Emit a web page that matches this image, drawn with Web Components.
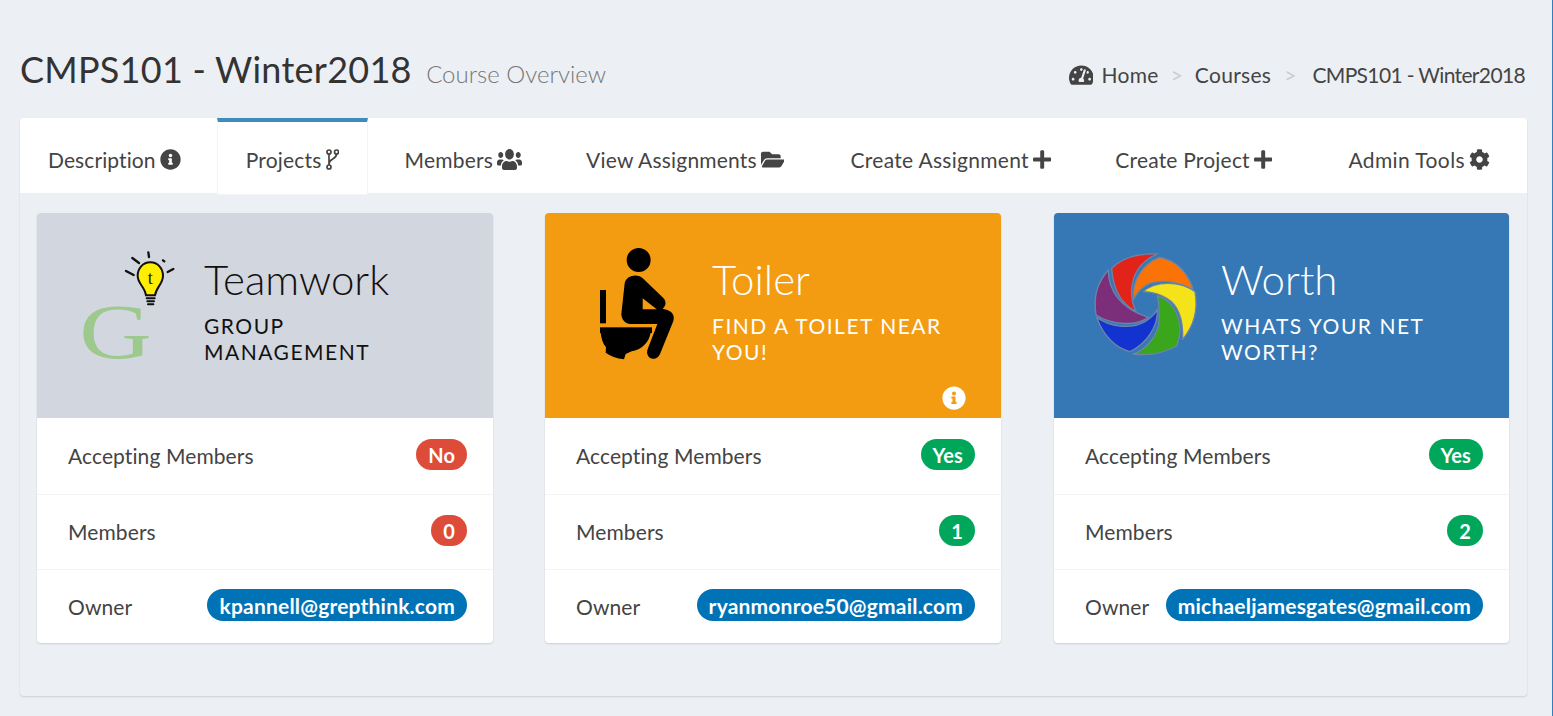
<!DOCTYPE html>
<html>
<head>
<meta charset="utf-8">
<title>CMPS101 - Winter2018</title>
<style>
  html, body { margin: 0; height: 100%; }
  body {
    background: #ecf0f5;
    color: #444;
    font-family: Lato, "Open Sans", "Liberation Sans", sans-serif;
    border-right: 1px solid #2f7fc1;
    box-sizing: border-box;
    overflow: hidden;
  }
</style>
</head>
<body>
<course-page>
  <page-header slot="header" heading="CMPS101 - Winter2018" sub="Course Overview">
    <fa-icon slot="crumb-icon" name="gauge" size="22"></fa-icon>
    <span slot="crumb" style="letter-spacing:.3px">Home</span>
    <span slot="crumb" style="letter-spacing:.3px">Courses</span>
    <span slot="crumb" style="letter-spacing:-.65px">CMPS101 - Winter2018</span>
  </page-header>
  <tab-bar slot="tabs">
    <tab-item icon="info" style="letter-spacing:.1px">Description</tab-item>
    <tab-item icon="branch" active style="margin-right:1px">Projects</tab-item>
    <tab-item icon="users">Members</tab-item>
    <tab-item icon="folder" style="margin-right:2px">View Assignments</tab-item>
    <tab-item icon="plus" style="letter-spacing:.3px">Create Assignment</tab-item>
    <tab-item icon="plus">Create Project</tab-item>
    <tab-item icon="cog" style="letter-spacing:.4px">Admin Tools</tab-item>
  </tab-bar>
  <project-card name="Teamwork" tagline="GROUP MANAGEMENT" bg="#d2d6de" fg="#111" accepting="No" members="0" owner="kpannell@grepthink.com" tone="red" logo="teamwork"></project-card>
  <project-card name="Toiler" tagline="FIND A TOILET NEAR YOU!" bg="#f39c12" fg="#fff" accepting="Yes" members="1" owner="ryanmonroe50@gmail.com" tone="green" logo="toiler" info></project-card>
  <project-card name="Worth" tagline="WHATS YOUR NET WORTH?" bg="#3578b5" fg="#fff" accepting="Yes" members="2" owner="michaeljamesgates@gmail.com" tone="green" logo="worth"></project-card>
</course-page>

<script>
const ICONS = {
  info: [512, "M256 8C119.043 8 8 119.083 8 256c0 136.997 111.043 248 248 248s248-111.003 248-248C504 119.083 392.957 8 256 8zm0 110c23.196 0 42 18.804 42 42s-18.804 42-42 42-42-18.804-42-42 18.804-42 42-42zm56 254c0 6.627-5.373 12-12 12h-88c-6.627 0-12-5.373-12-12v-24c0-6.627 5.373-12 12-12h12v-64h-12c-6.627 0-12-5.373-12-12v-24c0-6.627 5.373-12 12-12h64c6.627 0 12 5.373 12 12v100h12c6.627 0 12 5.373 12 12v24z"],
  plus: [448, "M416 208H272V64c0-17.67-14.33-32-32-32h-32c-17.67 0-32 14.33-32 32v144H32c-17.67 0-32 14.33-32 32v32c0 17.67 14.33 32 32 32h144v144c0 17.67 14.33 32 32 32h32c17.67 0 32-14.33 32-32V304h144c17.67 0 32-14.33 32-32v-32c0-17.67-14.33-32-32-32z"],
  users: [640, "M96 224c35.3 0 64-28.7 64-64s-28.7-64-64-64-64 28.7-64 64 28.7 64 64 64zm448 0c35.3 0 64-28.7 64-64s-28.7-64-64-64-64 28.7-64 64 28.7 64 64 64zm32 32h-64c-17.6 0-33.5 7.1-45.1 18.6 40.3 22.1 68.9 62 75.1 109.4h66c17.7 0 32-14.3 32-32v-32c0-35.3-28.7-64-64-64zm-256 0c61.9 0 112-50.1 112-112S381.9 32 320 32 208 82.1 208 144s50.1 112 112 112zm76.8 32h-8.3c-20.8 10-43.9 16-68.5 16s-47.6-6-68.5-16h-8.3C179.6 288 128 339.6 128 403.2V432c0 26.5 21.5 48 48 48h288c26.5 0 48-21.5 48-48v-28.8c0-63.6-51.6-115.2-115.2-115.2zm-223.7-13.4C161.5 263.1 145.6 256 128 256H64c-35.3 0-64 28.7-64 64v32c0 17.7 14.3 32 32 32h65.9c6.3-47.4 34.9-87.3 75.2-109.4z"],
  folder: [576, "M572.694 292.093L500.27 416.248A63.997 63.997 0 0 1 444.989 448H45.025c-18.523 0-30.064-20.093-20.731-36.093l72.424-124.155A64 64 0 0 1 152 256h399.964c18.523 0 30.064 20.093 20.73 36.093zM152 224h328v-48c0-26.51-21.49-48-48-48H272l-64-64H48C21.49 64 0 85.49 0 112v278.046l69.077-118.418C86.214 242.25 117.989 224 152 224z"],
  cog: [512, "M487.4 315.7l-42.6-24.6c4.3-23.2 4.3-47 0-70.2l42.6-24.6c4.9-2.8 7.1-8.6 5.5-14-11.1-35.6-30-67.8-54.7-94.6-3.8-4.1-10-5.1-14.8-2.3L380.8 110c-17.9-15.4-38.5-27.3-60.8-35.1V25.8c0-5.6-3.9-10.5-9.4-11.7-36.7-8.2-74.3-7.8-109.2 0-5.5 1.2-9.4 6.1-9.4 11.7V75c-22.2 7.9-42.8 19.8-60.8 35.1L88.7 85.5c-4.9-2.8-11-1.9-14.8 2.3-24.7 26.7-43.6 58.9-54.7 94.6-1.7 5.4.6 11.2 5.5 14L67.3 221c-4.3 23.2-4.3 47 0 70.2l-42.6 24.6c-4.9 2.8-7.1 8.6-5.5 14 11.1 35.6 30 67.8 54.7 94.6 3.8 4.1 10 5.1 14.8 2.3l42.6-24.6c17.9 15.4 38.5 27.3 60.8 35.1v49.2c0 5.6 3.9 10.5 9.4 11.7 36.7 8.2 74.3 7.8 109.2 0 5.5-1.2 9.4-6.1 9.4-11.7v-49.2c22.2-7.9 42.8-19.8 60.8-35.1l42.6 24.6c4.9 2.8 11 1.9 14.8-2.3 24.7-26.7 43.6-58.9 54.7-94.6 1.5-5.5-.7-11.3-5.6-14.1zM256 336c-44.1 0-80-35.9-80-80s35.9-80 80-80 80 35.9 80 80-35.9 80-80 80z"],
  gauge: [576, "M288 32C128.94 32 0 160.94 0 320c0 52.8 14.25 102.26 39.06 144.8 5.61 9.62 16.3 15.2 27.44 15.2h443c11.14 0 21.83-5.58 27.44-15.2C561.75 422.26 576 372.8 576 320c0-159.06-128.94-288-288-288zm0 64c14.71 0 26.58 10.13 30.32 23.65-1.11 2.26-2.64 4.23-3.45 6.67l-9.22 27.67c-5.13 3.49-10.97 6.01-17.64 6.01-17.67 0-32-14.33-32-32S270.33 96 288 96zM96 384c-17.67 0-32-14.33-32-32s14.33-32 32-32 32 14.33 32 32-14.33 32-32 32zm48-160c-17.67 0-32-14.33-32-32s14.33-32 32-32 32 14.33 32 32-14.33 32-32 32zm246.77-72.41l-61.33 184C343.13 347.33 352 364.54 352 384c0 11.72-3.38 22.55-8.88 32H232.88c-5.5-9.45-8.88-20.28-8.88-32 0-33.94 26.5-61.43 59.9-63.59l61.34-184.01c4.17-12.56 17.73-19.45 30.36-15.17 12.57 4.19 19.35 17.79 15.17 30.36zm14.66 57.2l15.52-46.55c3.47-1.29 7.13-2.23 11.05-2.23 17.67 0 32 14.33 32 32s-14.33 32-32 32c-11.38-.01-20.89-6.28-26.57-15.22zM480 384c-17.67 0-32-14.33-32-32s14.33-32 32-32 32 14.33 32 32-14.33 32-32 32z"]
};

class FaIcon extends HTMLElement {
  connectedCallback() {
    const name = this.getAttribute("name");
    const size = this.getAttribute("size") || 20;
    this.attachShadow({ mode: "open" });
    let svg;
    if (name === "branch") {
      // thin outlined branch, the stock glyph is too heavy here
      svg = `<svg width="13" height="21" viewBox="0 0 13 21" fill="none" stroke="currentColor" stroke-width="1.7">
        <circle cx="3" cy="3" r="2"/><circle cx="10.500" cy="3" r="2"/><circle cx="3" cy="18" r="2"/>
        <path d="M3 5v11M10.500 5c0 6-7.500 4-7.500 10"/></svg>`;
    } else if (name === "users") {
      // squeezed to the taller shape the reference has
      svg = `<svg width="25" height="21" viewBox="0 32 640 448" preserveAspectRatio="none" fill="currentColor"><path d="${ICONS.users[1]}"/></svg>`;
    } else {
      const [w, d] = ICONS[name];
      svg = `<svg height="${size}" viewBox="0 0 ${w} 512" fill="currentColor"><path d="${d}"/></svg>`;
    }
    this.shadowRoot.innerHTML = `<style>:host{display:inline-flex;align-items:center}svg{display:block}</style>${svg}`;
  }
}
customElements.define("fa-icon", FaIcon);

class CoursePage extends HTMLElement {
  constructor() {
    super();
    this.attachShadow({ mode: "open" });
    this.shadowRoot.innerHTML = `
      <style>
        :host { display: block; padding: 0 25px 20px 20px; }
        .box {
          background: #ecf0f5;
          border-radius: 4px;
          box-shadow: 0 1px 2px rgba(0,0,0,.14);
        }
        .cards {
          display: grid;
          grid-template-columns: repeat(3, 456px);
          column-gap: 52px;
          padding: 20px 18px 53px 17px;
        }
        ::slotted(project-card:last-child) { margin-left: 1px; }
      </style>
      <slot name="header"></slot>
      <div class="box">
        <slot name="tabs"></slot>
        <div class="cards"><slot></slot></div>
      </div>`;
  }
}
customElements.define("course-page", CoursePage);

class PageHeader extends HTMLElement {
  connectedCallback() {
    this.attachShadow({ mode: "open" });
    this.shadowRoot.innerHTML = `
      <style>
        :host {
          display: flex;
          justify-content: space-between;
          align-items: flex-start;
          height: 118px;
          box-sizing: border-box;
          padding: 43px 2px 0 0;
        }
        h1 { margin: 0; font-size: 36px; font-weight: 400; color: #333; line-height: 52px; letter-spacing: .25px; }
        small { font-size: 24px; font-weight: 300; color: #777; margin-left: 5px; letter-spacing: 0; }
        nav { display: flex; align-items: center; font-size: 21px; color: #444; margin-top: 19px; }
        .icon { margin-right: 8px; display: flex; }
      </style>
      <h1>${this.getAttribute("heading")} <small>${this.getAttribute("sub")}</small></h1>
      <nav>
        <span class="icon"><slot name="crumb-icon"></slot></span>
        <slot name="crumb"></slot>
      </nav>`;
    // separators go between the slotted crumbs
    const crumbs = this.querySelectorAll('[slot="crumb"]');
    crumbs.forEach((c, i) => {
      if (i > 0) {
        const s = document.createElement("span");
        s.slot = "crumb";
        s.textContent = ">";
        s.style.cssText = `color:#ccc;margin:0 ${i == 2 ? "16px 0 13px" : "12px"};`;
        c.before(s);
      }
    });
  }
}
customElements.define("page-header", PageHeader);

class TabBar extends HTMLElement {
  constructor() {
    super();
    this.attachShadow({ mode: "open" });
    this.shadowRoot.innerHTML = `
      <style>
        :host {
          display: flex;
          gap: 8px;
          height: 75px;
          background: #fff;
          border-radius: 4px 4px 0 0;
        }
        ::slotted(tab-item:last-child) { margin-left: auto; margin-right: 9px; }
      </style>
      <slot></slot>`;
  }
}
customElements.define("tab-bar", TabBar);

class TabItem extends HTMLElement {
  connectedCallback() {
    this.attachShadow({ mode: "open" });
    const on = this.hasAttribute("active");
    this.shadowRoot.innerHTML = `
      <style>
        :host {
          display: flex;
          align-items: center;
          box-sizing: border-box;
          height: ${on ? "77px" : "75px"};
          padding: 8px 28px 0;
          font-size: 21px;
          letter-spacing: .2px;
          color: #444;
          white-space: nowrap;
          ${on ? "background:#fff;border-top:4px solid #3c8dbc;border-left:1px solid #f4f4f4;border-right:1px solid #f4f4f4;border-bottom:1px solid #f4f4f4;padding-top:3px;" : ""}
        }
        fa-icon { margin-left: 4px; margin-top: -1px; }
      </style>
      <slot></slot><fa-icon name="${this.getAttribute("icon")}" size="21"></fa-icon>`;
  }
}
customElements.define("tab-item", TabItem);

class StatusPill extends HTMLElement {
  connectedCallback() {
    const colors = { red: "#dd4b39", green: "#00a65a", blue: "#0073b7" };
    this.attachShadow({ mode: "open" });
    this.shadowRoot.innerHTML = `
      <style>
        :host {
          display: inline-flex;
          align-items: center;
          justify-content: center;
          height: 31px;
          min-width: 36px;
          box-sizing: border-box;
          padding: 0 12px;
          border-radius: 16px;
          background: ${colors[this.getAttribute("tone")]};
          color: #fff;
          font-size: 20px;
          font-weight: 700;
          line-height: 1;
        }
      </style>
      <slot></slot>`;
  }
}
customElements.define("status-pill", StatusPill);

const LOGOS = {
  teamwork: `
    <g transform="translate(3 2) scale(.33333)">
      <text x="0" y="430" transform="translate(118 0) scale(1.3 1)" font-family="'Liberation Serif', serif" font-size="232" fill="#9dc98d">G</text>
      <g stroke="#111" stroke-linecap="round" fill="none" stroke-width="7">
        <path d="M325 112l2 14M277 129l20 15M258 168l23 12M369 136l4 3M383 171l17-9"/>
        <path d="M320 250h24M322 259h20M324 268h16" stroke-width="6"/>
      </g>
      <path d="M331 142c23 0 38 19 38 40 0 24-20 34-24 59h-27c-3-25-25-35-25-59 0-21 15-40 38-40z" fill="#ffee00" stroke="#111" stroke-width="6"/>
      <text x="331" y="208" text-anchor="middle" font-family="'Liberation Serif', serif" font-size="54" fill="#222">t</text>
    </g>`,
  toiler: `
    <g transform="translate(15 17) scale(.33333)" fill="#000">
      <circle cx="236" cy="90" r="36"/>
      <rect x="120" y="180" width="18" height="100"/>
      <rect x="120" y="292" width="156" height="17"/>
      <path d="M122 308H272C266 340 244 358 215 364L197 372L192 388C170 385 150 378 137 368L138 352C128 340 124 325 122 308Z"/>
      <path d="M194 160C198 136 232 128 250 146L310 204C320 214 318 228 308 236L322 240C340 246 346 262 338 278L300 372C294 388 276 390 266 380C260 372 260 365 264 355L292 282L212 282C196 282 184 268 184 252Z"/>
      <path d="M248 205L290 238H248Z" fill="#f39c12"/>
    </g>`,
  worth: `
    <g transform="translate(26 27) scale(.33333)" stroke="#6d84a8" stroke-width="4" stroke-linejoin="round">
      <path fill="#7d2e7a" d="M85 90C85 150 120 205 205 232C170 260 95 255 48 225C40 170 50 130 85 90Z"/>
      <path fill="#1233cf" d="M232 208C235 260 200 310 150 335C110 325 70 290 50 232C90 260 150 270 195 245C210 235 225 222 232 208Z"/>
      <path fill="#3aa61c" d="M232 168C270 175 300 220 300 270C300 295 295 305 290 318C250 340 205 348 160 342C195 330 225 295 235 260C240 225 238 195 232 168Z"/>
      <path fill="#f4e318" d="M190 155C225 122 300 122 345 155C355 210 340 260 308 298C310 240 295 195 260 175C235 160 210 155 190 155Z"/>
      <path fill="#f97306" d="M160 178C155 120 190 70 238 52C290 60 325 100 340 150C300 125 250 118 210 130C185 140 170 160 160 178Z"/>
      <path fill="#e2231a" d="M95 85C125 55 175 40 232 42C190 60 160 95 155 145C153 170 160 200 168 215C135 195 100 165 95 85Z"/>
    </g>`
};

class ProjectCard extends HTMLElement {
  connectedCallback() {
    const a = (n) => this.getAttribute(n);
    this.attachShadow({ mode: "open" });
    this.shadowRoot.innerHTML = `
      <style>
        :host {
          display: block;
          background: #fff;
          border-radius: 4px;
          box-shadow: 0 1px 2px rgba(0,0,0,.14);
          overflow: hidden;
        }
        .head {
          display: flex;
          height: 205px;
          background: ${a("bg")};
          color: ${a("fg")};
          position: relative;
        }
        svg.logo { flex: none; display: block; }
        .text { padding-top: 37px; min-width: 0; flex: 1; padding-right: 45px; }
        h3 { margin: 0; font-size: 42px; font-weight: 300; line-height: 58px; }
        h5 { margin: 5px 0 0; font-size: 21px; font-weight: 400; line-height: 26px; letter-spacing: 1.5px; }
        .info { position: absolute; right: 35px; bottom: 8px; color: #fff; }
        .row {
          display: flex;
          justify-content: space-between;
          align-items: center;
          height: 75px;
          box-sizing: border-box;
          padding: 0 26px 0 31px;
          border-bottom: 1px solid #f4f4f4;
          font-size: 21px;
          letter-spacing: .1px;
          color: #444;
        }
        .head + .row { height: 77px; }
        .row:last-child { border-bottom: 0; height: 73px; }
        .row span { margin-top: -1px; }
        status-pill { margin-top: -3px; }
      </style>
      <div class="head">
        <svg class="logo" width="167" height="205" viewBox="0 0 167 205">${LOGOS[a("logo")]}</svg>
        <div class="text">
          <h3>${a("name")}</h3>
          <h5>${a("tagline")}</h5>
        </div>
        ${this.hasAttribute("info") ? '<fa-icon class="info" name="info" size="24"></fa-icon>' : ""}
      </div>
      <div class="row"><span>Accepting Members</span><status-pill tone="${a("tone")}">${a("accepting")}</status-pill></div>
      <div class="row"><span>Members</span><status-pill tone="${a("tone")}">${a("members")}</status-pill></div>
      <div class="row"><span>Owner</span><status-pill tone="blue" style="font-size:21px;letter-spacing:.2px;height:32px">${a("owner")}</status-pill></div>`;
  }
}
customElements.define("project-card", ProjectCard);
</script>
</body>
</html>
